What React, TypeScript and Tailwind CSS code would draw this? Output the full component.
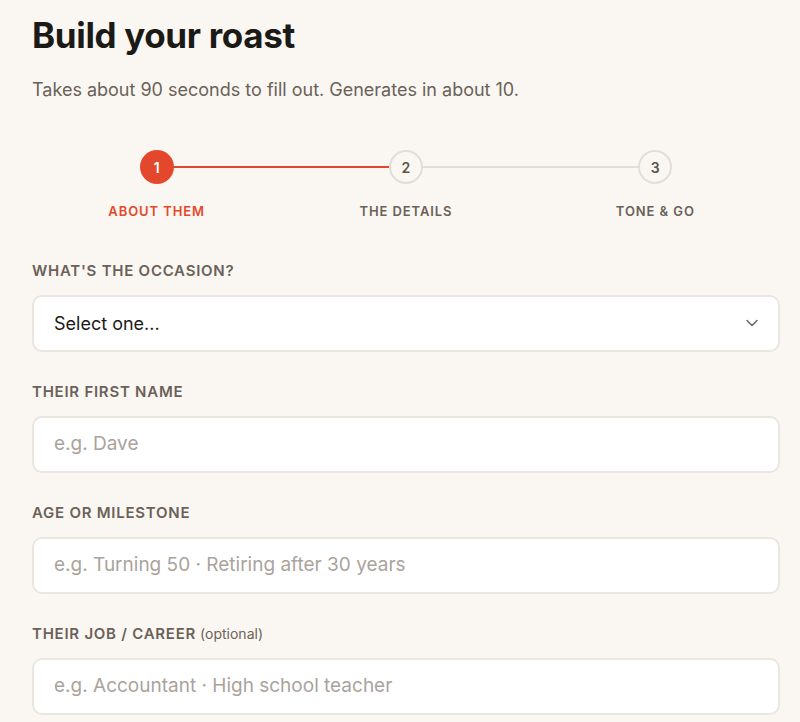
import { ChevronDown } from 'lucide-react'

const steps = [
  { n: 1, label: 'About them', active: true },
  { n: 2, label: 'The details', active: false },
  { n: 3, label: 'Tone & Go', active: false },
]

function Label({ children, extra }: { children: string; extra?: string }) {
  return (
    <div className="mb-[13px] text-[15px] leading-[22px] font-semibold uppercase tracking-[0.05em] text-[#6b6159]">
      {children}
      {extra && <span className="ml-1 normal-case tracking-normal font-normal text-[14px]">{extra}</span>}
    </div>
  )
}

function Field({ placeholder }: { placeholder: string }) {
  return (
    <div className="h-[57px] rounded-[10px] border-2 border-[#ebe6e0] bg-white px-5 flex items-center text-[19px] text-[#aaa39c]">
      {placeholder}
    </div>
  )
}

export default function App() {
  return (
    <div className="min-h-[722px] bg-[#faf7f2] pl-8 pr-5 pt-[13px] font-[Inter,sans-serif] text-[#1c1a17]">
      <h1 className="text-[35px] leading-[44px] font-bold tracking-[-0.01em]">Build your roast</h1>
      <p className="mt-[20px] text-[18px] leading-[26px] text-[#6b6159]">
        Takes about 90 seconds to fill out. Generates in about 10.
      </p>

      {/* stepper */}
      <div className="relative mt-[47px] grid grid-cols-3">
        <div className="absolute top-[16px] left-[16.67%] right-[50%] h-[2px] bg-[#e4482c]" />
        <div className="absolute top-[16px] left-[50%] right-[16.67%] h-[2px] bg-[#e2ddd7]" />
        {steps.map((s) => (
          <div key={s.n} className="relative flex flex-col items-center">
            <div
              className={
                s.active
                  ? 'w-[34px] h-[34px] rounded-full bg-[#e4482c] text-white flex items-center justify-center text-[14px] font-semibold'
                  : 'w-[34px] h-[34px] rounded-full bg-[#faf7f2] border-2 border-[#e2ddd7] text-[#5c534b] flex items-center justify-center text-[14px] font-semibold'
              }
            >
              {s.n}
            </div>
            <div
              className={
                'mt-[18px] text-[13px] font-semibold uppercase tracking-[0.07em] ' +
                (s.active ? 'text-[#e4482c]' : 'text-[#6b6159]')
              }
            >
              {s.label}
            </div>
          </div>
        ))}
      </div>

      <div className="mt-[38px]">
        <Label>What's the occasion?</Label>
        <div className="h-[57px] rounded-[10px] border-2 border-[#ebe6e0] bg-white pl-5 pr-4 flex items-center justify-between text-[18px] text-[#1c1a17]">
          Select one...
          <ChevronDown className="w-5 h-5 text-[#6b6159]" strokeWidth={1.75} />
        </div>
      </div>
      <div className="mt-[29px]">
        <Label>Their first name</Label>
        <Field placeholder="e.g. Dave" />
      </div>
      <div className="mt-[29px]">
        <Label>Age or milestone</Label>
        <Field placeholder="e.g. Turning 50 · Retiring after 30 years" />
      </div>
      <div className="mt-[29px]">
        <Label extra="(optional)">Their job / career</Label>
        <Field placeholder="e.g. Accountant · High school teacher" />
      </div>
    </div>
  )
}
